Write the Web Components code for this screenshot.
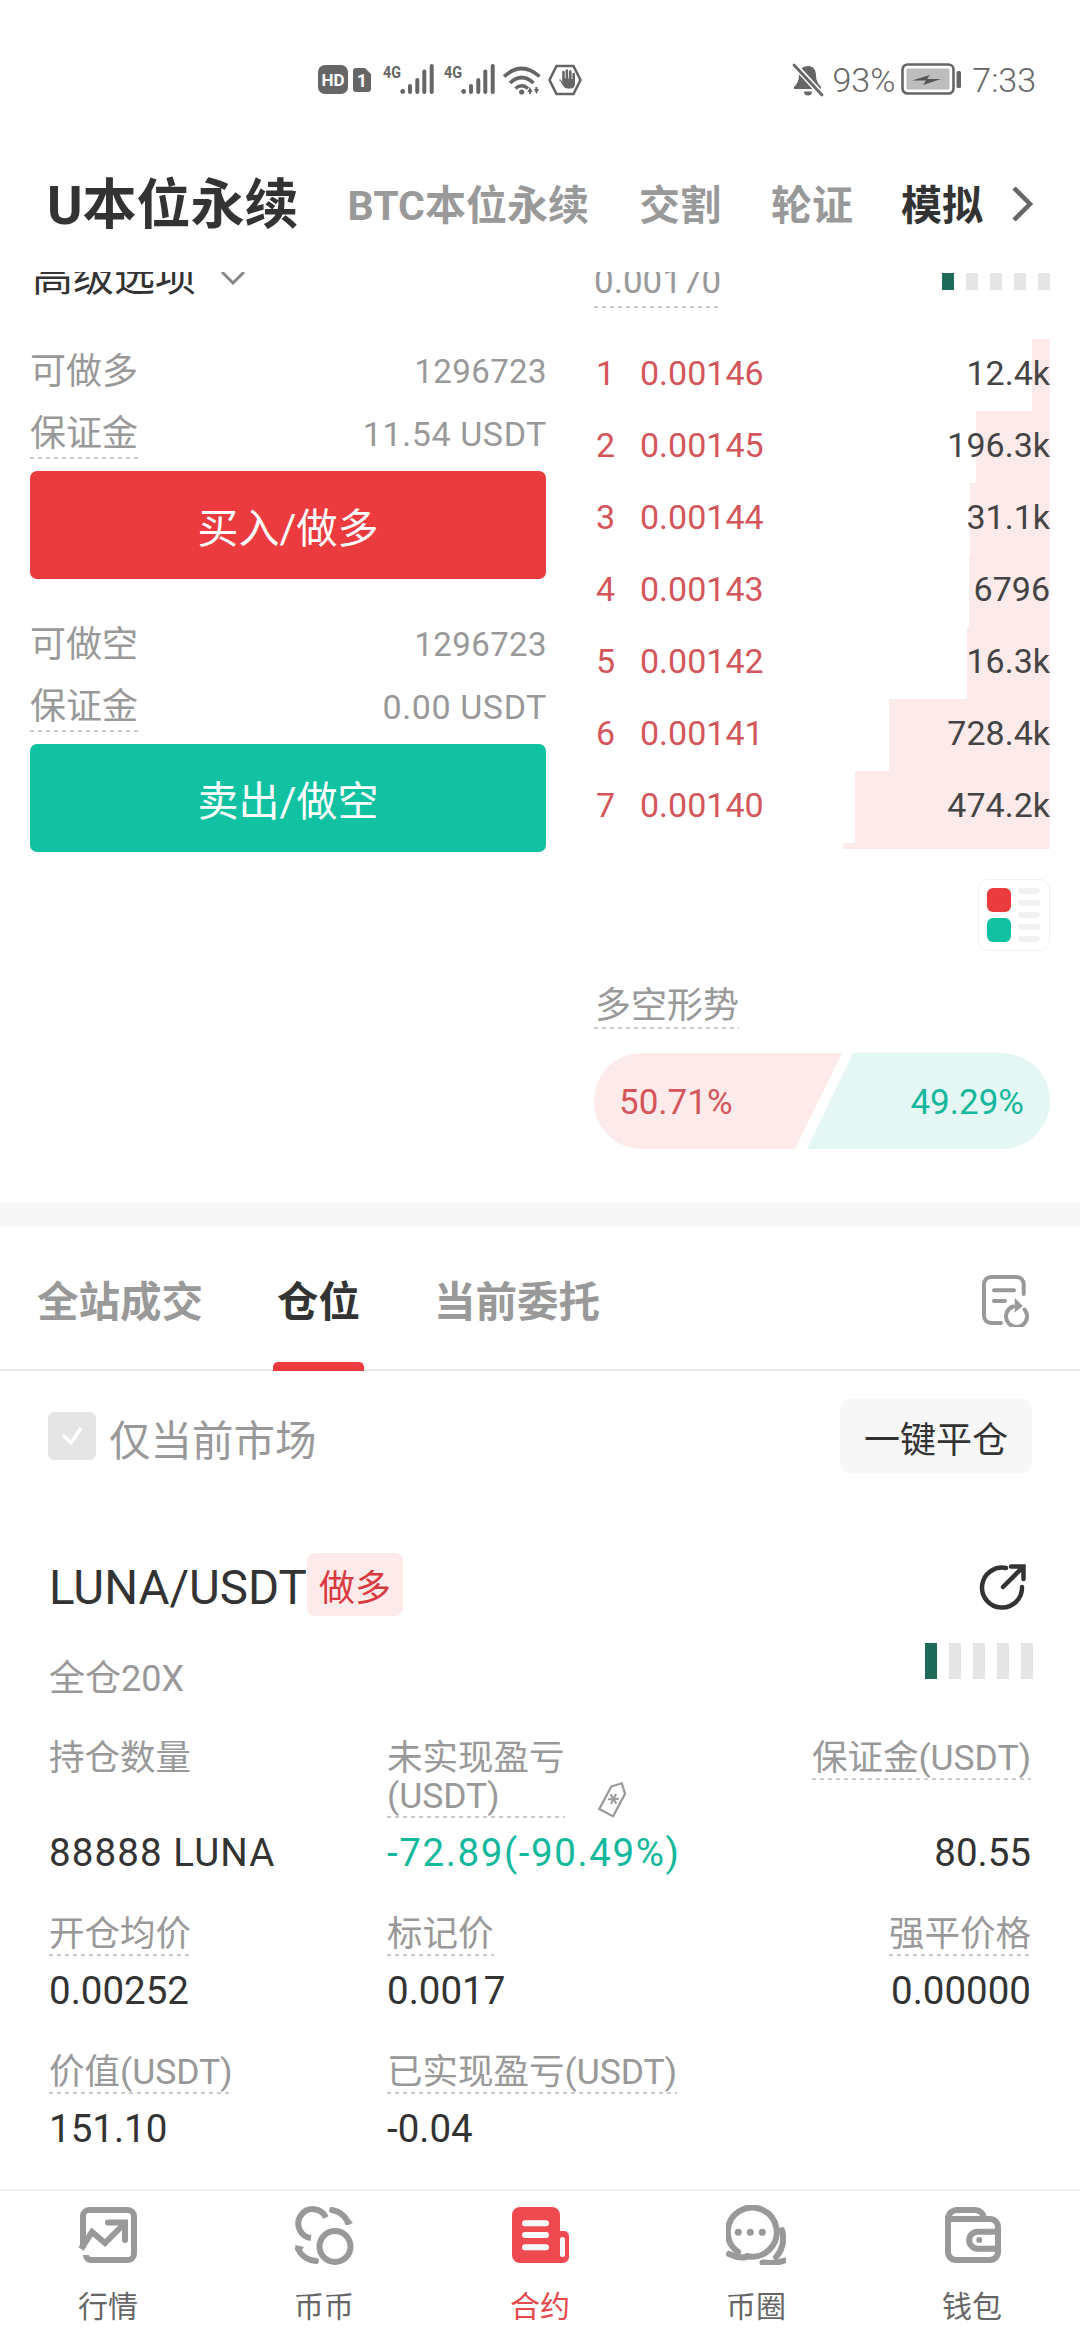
<!DOCTYPE html>
<html lang="zh-CN">
<head>
<meta charset="utf-8">
<title>U本位永续</title>
<style>
  html, body { margin: 0; padding: 0; background: #fff; }
  body { font-family: Roboto, "Noto Sans CJK SC", sans-serif; color: #333; }
</style>
</head>
<body>
<app-shell>
  <status-bar></status-bar>
  <market-tabs>
    <market-tab main>U本位永续</market-tab>
    <market-tab>BTC本位永续</market-tab>
    <market-tab>交割</market-tab>
    <market-tab>轮证</market-tab>
    <market-tab dark>模拟</market-tab>
  </market-tabs>
  <trade-section>
    <order-panel slot="left"></order-panel>
    <order-book slot="right"></order-book>
  </trade-section>
  <position-tabs></position-tabs>
  <position-filter></position-filter>
  <position-card></position-card>
  <bottom-nav></bottom-nav>
</app-shell>

<script>
const dashStyle = /*css*/ `
  background-image: linear-gradient(90deg, #ccc 4px, transparent 4px);
  background-size: 8px 2px;
  background-position: left bottom;
  background-repeat: repeat-x;
`;

class BaseElement extends HTMLElement {
  constructor() {
    super();
    this.attachShadow({ mode: "open" });
  }
  connectedCallback() {
    if (!this.rendered) {
      this.rendered = true;
      this.shadowRoot.innerHTML = this.render();
    }
  }
}

class AppShell extends BaseElement {
  render() {
    return `<style>
      :host { display: flex; flex-direction: column; width: 1080px; height: 2340px; overflow: hidden; background: #fff; }
    </style><slot></slot>`;
  }
}

class StatusBar extends BaseElement {
  render() {
    const bars = (o) => `
      <text x="${65 + o}" y="14.5" font-size="16" font-weight="700" textLength="18" lengthAdjust="spacingAndGlyphs">4G</text>
      <circle cx="${84.7 + o}" cy="28.5" r="2.4"/>
      <rect x="${90 + o}" y="21" width="4" height="10" rx="2"/>
      <rect x="${97.3 + o}" y="15" width="4" height="16" rx="2"/>
      <rect x="${104.3 + o}" y="6.5" width="4" height="24.5" rx="2"/>
      <rect x="${111.7 + o}" y="1" width="4" height="30" rx="2"/>`;
    return `<style>
      :host { display: flex; justify-content: space-between; align-items: center; box-sizing: border-box; height: 105px; padding: 54px 44px 0 318px; color: #666; font-size: 34px; font-weight: 300; }
      svg { display: block; fill: #666; flex: none; }
      .right { display: flex; align-items: center; }
      .pct { margin: 0 6px 0 8px; }
      .time { margin-left: 10px; }
    </style>
    <svg width="265" height="34" viewBox="0 0 265 34" font-family="Roboto, sans-serif">
      <rect x="0" y="2" width="30" height="29" rx="7"/>
      <text x="15" y="23" font-size="17" font-weight="700" fill="#fff" text-anchor="middle">HD</text>
      <path d="M38 5h9l6 6v15a3 3 0 0 1-3 3H38a3 3 0 0 1-3-3V8a3 3 0 0 1 3-3z"/>
      <text x="44" y="23.5" font-size="18" font-weight="700" fill="#fff" text-anchor="middle">1</text>
      ${bars(0)}${bars(61)}
      <path d="M186 13.5Q203.7-2.5 221.5 13.5M192 20Q203.7 9 215.5 20M197.5 25.5Q203.7 20 210 25.5" fill="none" stroke="#666" stroke-width="3.6"/>
      <circle cx="203.7" cy="29" r="2.6"/>
      <path d="M212 24l2.6 5h-1.6v2h-2v-2h-1.5zM218.5 31l-2.6-5h1.5v-2h2v2h1.6z"/>
      <path d="M238.5 3h17l7 14-7 14h-17l-7-14z" fill="none" stroke="#666" stroke-width="2.6"/>
      <path d="M242 17.5l3 5c1 2 2.5 3 5 3h2.5c3 0 4.5-2 4.5-5V11a1.3 1.3 0 0 0-2.6 0v5h-.8V8.5a1.3 1.3 0 0 0-2.6 0v7h-.8v-8a1.3 1.3 0 0 0-2.6 0v8h-.8V9a1.3 1.3 0 0 0-2.6 0v10l-1.5-2.2c-.8-1-2.4 0-1.7.7z"/>
    </svg>
    <div class="right">
      <svg width="32" height="34" viewBox="0 0 32 34">
        <path d="M16 3c-5.5 0-9 4-9 9.5 0 5-2 8.5-5 11.5v2h27v-2c-3-3-5-6.5-5-11.5C24 7 21.5 3 16 3z"/>
        <path d="M12 28.5h8a4 4 0 0 1-8 0z"/>
        <path d="M2 1.5L30 32" stroke="#fff" stroke-width="6"/>
        <path d="M2 2L30 32" stroke="#666" stroke-width="2.8" stroke-linecap="round"/>
      </svg>
      <span class="pct">93%</span>
      <svg width="61" height="33" viewBox="0 0 61 33">
        <rect x="1.5" y="1.5" width="51" height="29" rx="5" fill="none" stroke="#666" stroke-width="2.6"/>
        <rect x="5.5" y="5.5" width="43" height="21" rx="1.5" fill="#bdbdbd"/>
        <path d="M11 17.5l18-5.500-3 4 14 0-18 6 3-4.500z" fill="#555"/>
        <rect x="55.5" y="8" width="4.5" height="17" rx="1.5"/>
      </svg>
      <span class="time">7:33</span>
    </div>`;
  }
}

class MarketTabs extends BaseElement {
  render() {
    return `<style>
      :host { display: flex; align-items: center; gap: 50px; box-sizing: border-box; height: 167px; padding: 34px 0 0 47px; }
      svg { display: block; flex: none; margin: -4px 0 0 -24px; }
    </style><slot></slot>
    <svg width="26" height="36" viewBox="0 0 26 36"><path d="M5 2l16 16L5 34" fill="none" stroke="#666" stroke-width="4.5"/></svg>`;
  }
}

class MarketTab extends BaseElement {
  render() {
    return `<style>
      :host { display: block; flex: none; font-size: 41px; font-weight: 700; line-height: 64px; color: #999; white-space: nowrap; }
      :host([main]) { font-size: 54px; color: #333; margin-right: -1px; }
      :host([dark]) { color: #333; margin-left: -2px; }
    </style><slot></slot>`;
  }
}

class TradeSection extends BaseElement {
  render() {
    return `<style>
      :host { display: flex; box-sizing: border-box; height: 931px; padding: 0 30px; overflow: hidden; }
      .left { width: 516px; flex: none; }
      .right { width: 456px; margin-left: 48px; flex: none; }
    </style>
    <div class="left"><slot name="left"></slot></div>
    <div class="right"><slot name="right"></slot></div>`;
  }
}

class DashLabel extends BaseElement {
  render() {
    return `<style>
      :host { display: inline-block; padding-bottom: 6px; color: #999; white-space: nowrap; ${dashStyle} }
    </style><slot></slot>`;
  }
}

class OrderSide extends BaseElement {
  render() {
    const color = this.getAttribute("side") === "sell" ? "#10c2a2" : "#ec3b3f";
    return `<style>
      :host { display: block; color: #999; }
      .row { display: flex; justify-content: space-between; align-items: center; font-size: 36px; height: 48px; line-height: 48px; padding-top: 3px; box-sizing: border-box; }
      .row.margin { height: 50px; margin-top: 15px; align-items: flex-start; line-height: 44px; }
      .num { font-size: 34px; letter-spacing: .6px; margin-right: -1px; }
      .avail { font-size: 33px; letter-spacing: .4px; }
      dash-label { font-size: 36px; height: 41px; }
      button { display: block; width: 100%; height: 108px; margin: 12px 0 0; padding: 0; border: 0; border-radius: 7px; background: ${color}; color: #fff; font: inherit; font-size: 41px; }
    </style>
    <div class="row"><span>${this.getAttribute("open")}</span><span class="num avail">${this.getAttribute("amount")}</span></div>
    <div class="row margin"><dash-label>保证金</dash-label><span class="num">${this.getAttribute("cost")}</span></div>
    <button>${this.getAttribute("action")}</button>`;
  }
}

class OrderPanel extends BaseElement {
  render() {
    return `<style>
      :host { display: block; }
      .adv { display: flex; align-items: center; height: 48px; margin: -23px 0 49px 2px; font-size: 41px; color: #333; }
      .adv svg { margin: 10px 0 0 24px; }
      order-side + order-side { margin-top: 40px; }
    </style>
    <div class="adv">高级选项
      <svg width="26" height="14" viewBox="0 0 26 14"><path d="M2 1l11 11L24 1" fill="none" stroke="#888" stroke-width="3"/></svg>
    </div>
    <order-side side="buy" open="可做多" amount="1296723" cost="11.54 USDT" action="买入/做多"></order-side>
    <order-side side="sell" open="可做空" amount="1296723" cost="0.00 USDT" action="卖出/做空"></order-side>`;
  }
}

class DepthMeter extends BaseElement {
  render() {
    const h = this.getAttribute("h") || 17;
    return `<style>
      :host { display: flex; gap: 12px; flex: none; }
      i { display: block; width: 12px; height: ${h}px; background: #e5e5e5; }
      i:first-of-type { background: #1f6b5a; }
    </style><i></i><i></i><i></i><i></i><i></i>`;
  }
}

class BookRow extends BaseElement {
  render() {
    const depth = this.getAttribute("depth");
    return `<style>
      :host { display: flex; align-items: center; box-sizing: border-box; height: 72px; padding: 0 0 5px 2px; font-size: 34px; color: #d4555a;
        background: linear-gradient(to left, #fdeaea ${depth}px, transparent ${depth}px); }
      .i { width: 44px; }
      .q { margin-left: auto; color: #444; }
    </style>
    <span class="i">${this.getAttribute("n")}</span><span>${this.getAttribute("price")}</span><span class="q">${this.getAttribute("qty")}</span>`;
  }
}

class RatioBar extends BaseElement {
  render() {
    return `<style>
      :host { display: flex; height: 96px; font-size: 35px; }
      div { display: flex; align-items: center; box-sizing: border-box; height: 96px; padding-top: 2px; flex: none; }
      .long { width: 248px; padding-left: 25px; background: #fdeaea; color: #d4555a; border-radius: 48px 0 0 48px;
        clip-path: polygon(0 0, 100% 0, 201px 100%, 0 100%); }
      .short { width: 243px; margin-left: -35px; padding-right: 26px; justify-content: flex-end; background: #e5f7f5; color: #14b89c; border-radius: 0 48px 48px 0;
        clip-path: polygon(46px 0, 100% 0, 100% 100%, 0 100%); }
    </style>
    <div class="long">${this.getAttribute("long")}</div><div class="short">${this.getAttribute("short")}</div>`;
  }
}

class OrderBook extends BaseElement {
  render() {
    const rows = [
      [1, "0.00146", "12.4k", 18],
      [2, "0.00145", "196.3k", 74],
      [3, "0.00144", "31.1k", 80],
      [4, "0.00143", "6796", 81],
      [5, "0.00142", "16.3k", 83],
      [6, "0.00141", "728.4k", 161],
      [7, "0.00140", "474.2k", 195],
    ].map((r) => `<book-row n="${r[0]}" price="${r[1]}" qty="${r[2]}" depth="${r[3]}"></book-row>`).join("");
    return `<style>
      :host { display: block; }
      .head { display: flex; justify-content: space-between; align-items: flex-start; height: 50px; margin: -11px 0 28px; }
      .head dash-label { font-size: 35px; line-height: 42px; padding-bottom: 5px; }
      depth-meter { margin-top: 12px; }
      .tail { height: 6px; width: 207px; margin-left: auto; background: #fdeaea; }
      .style-btn { display: grid; grid-template-columns: 24px 22px; column-gap: 7px; align-content: start; box-sizing: border-box; width: 72px; height: 72px; margin: 30px 0 32px auto; padding: 8px; border: 1.5px solid #f1f1f1; border-radius: 10px; }
      .blocks { display: flex; flex-direction: column; gap: 6px; }
      .blocks i { display: block; width: 24px; height: 24px; border-radius: 6px; background: #ec3b3f; }
      .blocks i + i { background: #10c2a2; }
      .lines { display: flex; flex-direction: column; gap: 6px; }
      .lines i { display: block; height: 6px; border-radius: 3px; background: #f1f1f1; }
      .trend { font-size: 36px; line-height: 46px; height: 46px; margin-bottom: 24px; }
      .trend dash-label { padding-bottom: 0; height: 46px; padding-left: 1px; }
    </style>
    <div class="head"><dash-label>0.00170</dash-label><depth-meter></depth-meter></div>
    ${rows}
    <div class="tail"></div>
    <div class="style-btn">
      <div class="blocks"><i></i><i></i></div>
      <div class="lines"><i></i><i></i><i></i><i></i><i></i></div>
    </div>
    <div class="trend"><dash-label>多空形势</dash-label></div>
    <ratio-bar long="50.71%" short="49.29%"></ratio-bar>`;
  }
}

class PositionTabs extends BaseElement {
  render() {
    return `<style>
      :host { display: flex; align-items: flex-start; gap: 74px; box-sizing: border-box; height: 168px; padding: 51px 50px 0 37px; border-top: 24px solid #f7f7f7; border-bottom: 2px solid #e8e8e8; font-size: 41.5px; font-weight: 700; line-height: 50px; color: #999; }
      span { position: relative; height: 92px; white-space: nowrap; }
      .on { color: #333; }
      .on::after { content: ""; position: absolute; left: -4px; right: -4px; bottom: -1px; height: 9px; border-radius: 5px 5px 0 0; background: #ec3b3f; }
      svg { margin: -5px 0 0 auto; display: block; }
    </style>
    <span>全站成交</span><span class="on">仓位</span><span>当前委托</span>
    <svg width="50" height="54" viewBox="0 0 50 54" fill="none" stroke="#999" stroke-width="4" stroke-linecap="round">
      <path d="M43.7 21V11a7 7 0 0 0-7-7H11a7 7 0 0 0-7 7v32a7 7 0 0 0 7 7h10"/>
      <path d="M14 17.3h20M14 28h11"/>
      <path d="M44.5 36.5A10.5 10.5 0 1 1 33 33.5"/>
      <path d="M36 28l5 5-5 4z" fill="#999" stroke-width="2.5"/>
    </svg>`;
  }
}

class PositionFilter extends BaseElement {
  render() {
    return `<style>
      :host { display: flex; align-items: center; justify-content: space-between; padding: 28px 48px 0 48px; }
      .check { display: flex; align-items: center; gap: 13px; font-size: 41.5px; color: #999; }
      .check span + span { padding-top: 3px; }
      .box { display: flex; align-items: center; justify-content: center; width: 48px; height: 48px; border-radius: 6px; background: #e5e5e5; }
      button { width: 192px; height: 74px; padding: 2px 0 0; border: 0; border-radius: 10px; background: #f7f7f7; color: #333; font: inherit; font-size: 36px; }
    </style>
    <div class="check">
      <span class="box"><svg width="26" height="22" viewBox="0 0 26 22"><path d="M4 10l8 8 10-15" fill="none" stroke="#fff" stroke-width="3.5"/></svg></span>
      <span>仅当前市场</span>
    </div>
    <button>一键平仓</button>`;
  }
}

class StatCell extends BaseElement {
  render() {
    const right = this.hasAttribute("right");
    const plain = this.hasAttribute("plain");
    const color = this.getAttribute("color") || "#333";
    const spacing = this.getAttribute("spacing") || "0";
    return `<style>
      :host { display: flex; flex-direction: column; justify-content: space-between; ${right ? "align-items: flex-end;" : "align-items: flex-start;"} }
      .head { display: flex; align-items: flex-end; }
      dash-label { font-size: 35.5px; line-height: 38px; padding-top: 3px; padding-bottom: 3px; ${plain ? "background: none;" : ""} }
      .value { margin-top: 10px; font-size: 38.5px; line-height: 50px; letter-spacing: ${spacing}px; color: ${color}; white-space: nowrap; }
      ::slotted(svg) { display: block; margin-left: 30px; }
    </style>
    <div class="head"><dash-label><slot name="label"></slot></dash-label><slot name="extra"></slot></div>
    <div class="value">${this.getAttribute("value")}</div>`;
  }
}

class PositionCard extends BaseElement {
  render() {
    return `<style>
      :host { display: block; padding: 80px 49px 0 49px; }
      .title { display: flex; align-items: center; height: 63px; font-size: 47.5px; color: #333; }
      .pair { padding-top: 6px; }
      .badge { display: flex; align-items: center; justify-content: center; width: 96px; height: 63px; border-radius: 8px; background: #fdeaea; color: #d93a40; font-size: 36px; }
      .title svg { margin: 5px 3px 0 auto; display: block; }
      .sub { display: flex; justify-content: space-between; align-items: flex-start; height: 58px; margin-top: 27px; font-size: 36px; color: #999; }
      .sub span { margin-top: 11px; line-height: 50px; }
      .sub depth-meter { margin-right: -2px; }
      .grid { display: grid; grid-template-columns: 338px 1fr auto; row-gap: 34px; margin-top: 35px; }
    </style>
    <div class="title"><span class="pair">LUNA/USDT</span><span class="badge">做多</span>
      <svg width="50" height="50" viewBox="0 0 50 50" fill="none" stroke="#333" stroke-width="4.5" stroke-linecap="round">
        <path d="M28 6A20 20 0 1 0 44 25"/>
        <path d="M25 25L44 6M33 4.5h12.5V17"/>
      </svg>
    </div>
    <div class="sub"><span>全仓20X</span><depth-meter h="36"></depth-meter></div>
    <div class="grid">
      <stat-cell plain value="88888 LUNA" spacing="1.1"><span slot="label">持仓数量</span></stat-cell>
      <stat-cell value="-72.89(-90.49%)" color="#14b89c" spacing="1.6">
        <span slot="label">未实现盈亏<br>(USDT)</span>
        <svg slot="extra" width="38" height="40" viewBox="0 0 34 36" fill="none" stroke="#999" stroke-width="2">
          <g transform="rotate(28 17 18)">
            <path d="M10 10l7-7 7 7v23H10z"/>
            <path d="M17 14v10M12.7 16.5l8.6 5M21.3 16.5l-8.6 5" stroke-width="1.8"/>
          </g>
        </svg>
      </stat-cell>
      <stat-cell right value="80.55"><span slot="label">保证金(USDT)</span></stat-cell>
      <stat-cell value="0.00252"><span slot="label">开仓均价</span></stat-cell>
      <stat-cell value="0.0017"><span slot="label">标记价</span></stat-cell>
      <stat-cell right value="0.00000"><span slot="label">强平价格</span></stat-cell>
      <stat-cell value="151.10"><span slot="label">价值(USDT)</span></stat-cell>
      <stat-cell value="-0.04"><span slot="label">已实现盈亏(USDT)</span></stat-cell>
    </div>`;
  }
}

const navIcons = {
  market: `<g fill="none" stroke="#999" stroke-width="6">
    <path d="M5 43V11a6 6 0 0 1 6-6h39a6 6 0 0 1 6 6v38a6 6 0 0 1-6 6H13a5 5 0 0 1-5-5"/>
    <path d="M3 44L14 27l13 11 19-19"/>
    <path d="M30 17.5h17V35" stroke-linecap="round"/>
  </g>`,
  spot: `<g fill="none" stroke="#999" stroke-width="6">
    <circle cx="41" cy="41.5" r="15.5"/>
    <path d="M32 12.5A14.5 14.5 0 1 0 17 33"/>
    <path d="M38 5A22 22 0 0 1 54 17" stroke-linecap="round"/>
    <path d="M4 44A22 22 0 0 0 22 56" stroke-linecap="round"/>
  </g>
  <path d="M50 9l9 9-8 2z" fill="#999"/><path d="M1 40l9 2-6 8z" fill="#999"/>`,
  contract: `<path d="M10 2h32a8 8 0 0 1 8 8v16h4a5 5 0 0 1 5 5v21a6 6 0 0 1-6 6H10a8 8 0 0 1-8-8V10a8 8 0 0 1 8-8z" fill="#ef4a4f"/>
    <path d="M15 18.3h21M15 30h21M15 42.3h21" stroke="#fff" stroke-width="6" stroke-linecap="round"/>
    <rect x="50" y="32" width="5" height="20" rx="2.5" fill="#fff"/>`,
  circle: `<g fill="none" stroke="#999" stroke-width="6" stroke-linecap="round">
    <path d="M12 47A24.5 24.5 0 1 1 21 51"/>
    <path d="M3 49c6 3 12 4 18 3"/>
    <path d="M56 25c3 10 0 21-6 27"/>
    <path d="M36.5 57.5c7 1 15 .5 22-2"/>
  </g>
  <circle cx="12.3" cy="27.3" r="3.5" fill="#999"/><circle cx="24.3" cy="27.3" r="3.5" fill="#999"/><circle cx="36.3" cy="27.3" r="3.5" fill="#999"/>`,
  wallet: `<g fill="none" stroke="#999" stroke-width="6">
    <path d="M6 14a9 9 0 0 1 9-9h18a9 9 0 0 1 9 8"/>
    <path d="M6 14h42a8 8 0 0 1 8 8v25a8 8 0 0 1-8 8H14a8 8 0 0 1-8-8z"/>
    <path d="M55.7 26.7h-20a8.5 8.5 0 0 0 0 17h20"/>
  </g>
  <circle cx="37.3" cy="35" r="3" fill="#999"/>`,
};

class NavItem extends BaseElement {
  render() {
    const on = this.hasAttribute("active");
    return `<style>
      :host { display: flex; flex-direction: column; align-items: center; width: 216px; flex: none; font-size: 30px; line-height: 40px; color: ${on ? "#e5484d" : "#666"}; }
      svg { display: block; margin-bottom: 22px; }
    </style>
    <svg width="60" height="60" viewBox="0 0 60 60">${navIcons[this.getAttribute("icon")]}</svg>
    <span><slot></slot></span>`;
  }
}

class BottomNav extends BaseElement {
  render() {
    return `<style>
      :host { display: flex; box-sizing: border-box; height: 151px; margin-top: auto; padding: 14px 0 0; border-top: 2px solid #f0f0f0; }
    </style>
    <nav-item icon="market">行情</nav-item>
    <nav-item icon="spot">币币</nav-item>
    <nav-item icon="contract" active>合约</nav-item>
    <nav-item icon="circle">币圈</nav-item>
    <nav-item icon="wallet">钱包</nav-item>`;
  }
}

customElements.define("app-shell", AppShell);
customElements.define("status-bar", StatusBar);
customElements.define("market-tabs", MarketTabs);
customElements.define("market-tab", MarketTab);
customElements.define("trade-section", TradeSection);
customElements.define("dash-label", DashLabel);
customElements.define("order-side", OrderSide);
customElements.define("order-panel", OrderPanel);
customElements.define("depth-meter", DepthMeter);
customElements.define("book-row", BookRow);
customElements.define("ratio-bar", RatioBar);
customElements.define("order-book", OrderBook);
customElements.define("position-tabs", PositionTabs);
customElements.define("position-filter", PositionFilter);
customElements.define("stat-cell", StatCell);
customElements.define("position-card", PositionCard);
customElements.define("nav-item", NavItem);
customElements.define("bottom-nav", BottomNav);
</script>
</body>
</html>
